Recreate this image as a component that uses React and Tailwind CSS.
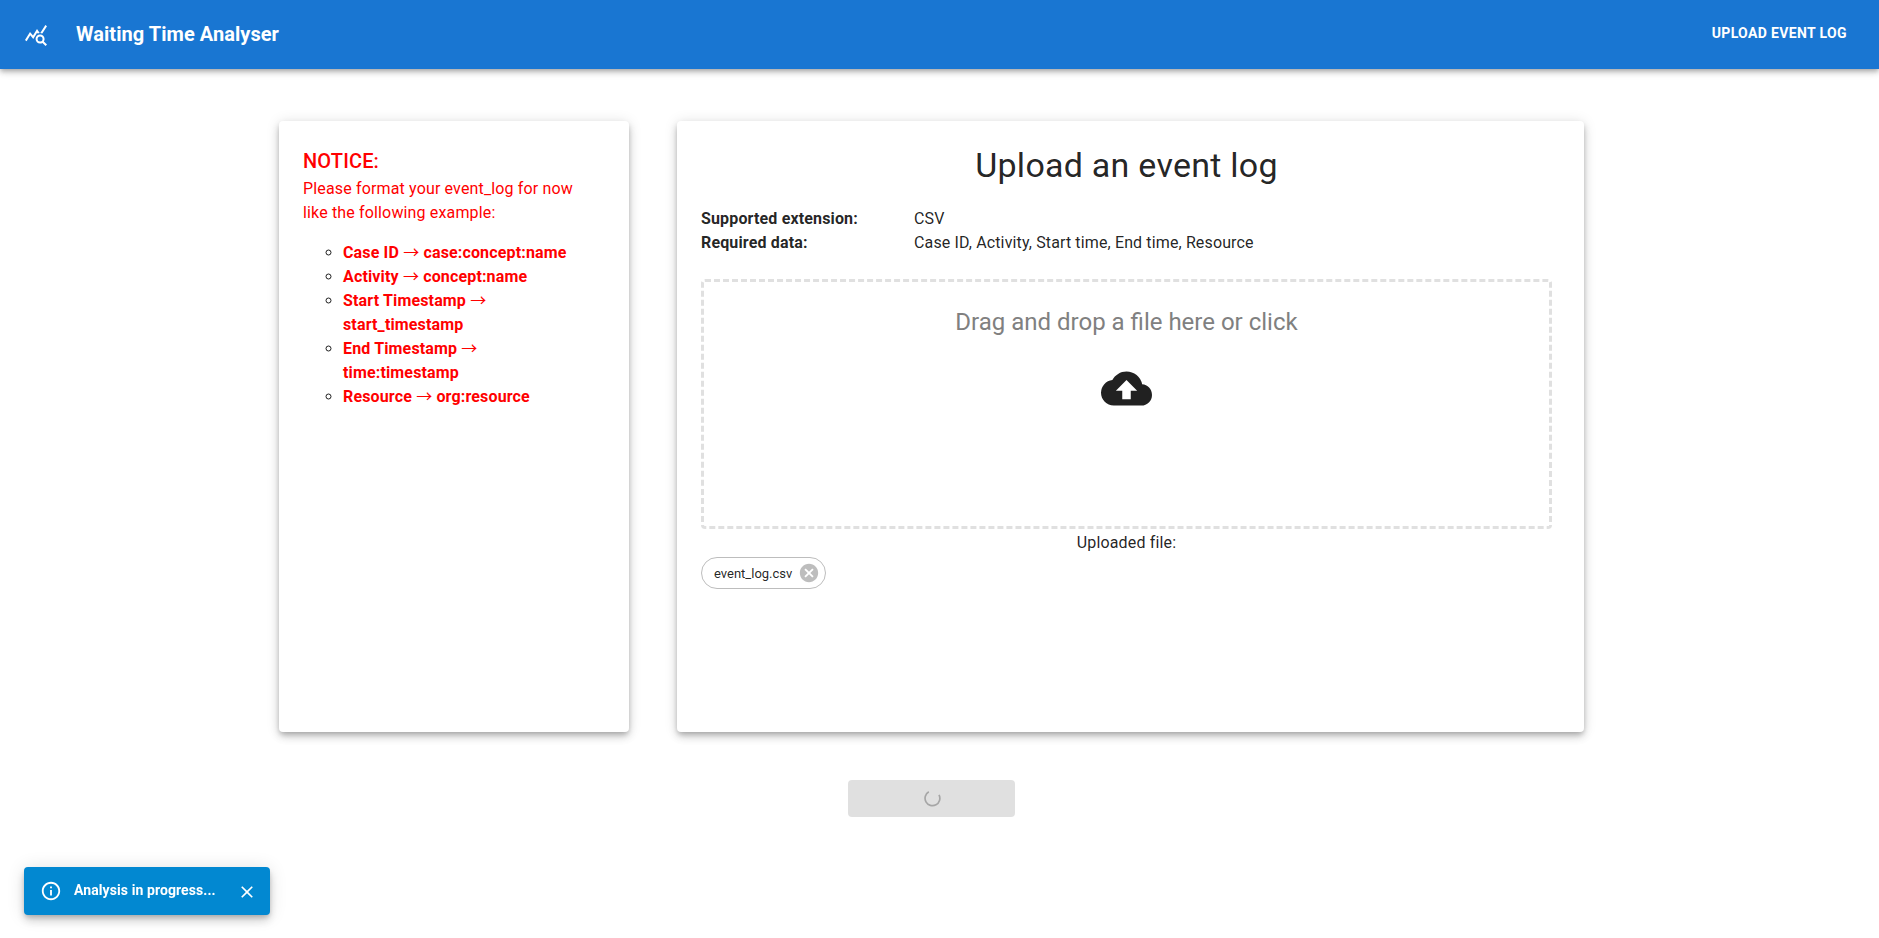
import React from "react";
import { MdQueryStats, MdCloudUpload, MdCancel, MdClose, MdOutlineInfo } from "react-icons/md";

const mappings = [
  ["Case ID", "case:concept:name"],
  ["Activity", "concept:name"],
  ["Start Timestamp", "start_timestamp"],
  ["End Timestamp", "time:timestamp"],
  ["Resource", "org:resource"],
];

const cardShadow =
  "rounded bg-white shadow-[0px_3px_5px_-1px_rgba(0,0,0,0.2),0px_5px_8px_0px_rgba(0,0,0,0.14),0px_1px_14px_0px_rgba(0,0,0,0.12)]";

function TopBar() {
  return (
    <header className="flex h-[69px] items-center justify-between bg-[#1976d2] px-6 text-white shadow-[0px_2px_4px_-1px_rgba(0,0,0,0.2),0px_4px_5px_0px_rgba(0,0,0,0.14),0px_1px_10px_0px_rgba(0,0,0,0.12)]">
      <div className="flex items-center gap-7">
        <MdQueryStats className="size-6" />
        <h1 className="pb-0.5 text-[20px] leading-8 font-bold tracking-[0.05px]">Waiting Time Analyser</h1>
      </div>
      <button className="px-2 pb-[3px] text-[14px] leading-6 font-bold tracking-[0.36px] uppercase">
        Upload Event Log
      </button>
    </header>
  );
}

function Notice() {
  return (
    <section className={`${cardShadow} h-[611px] w-[350px] pt-6 pr-8 pl-6`}>
      <h2 className="text-[20px] leading-8 font-medium tracking-[0.15px] text-[#f00]">NOTICE:</h2>
      <p className="text-[16px] leading-6 tracking-[0.15px] text-[#f00]">
        Please format your event_log for now like the following example:
      </p>
      <ul className="mt-4 list-[circle] pr-4 pl-10 text-[16px] leading-6 tracking-[0.15px]">
        {mappings.map(([from, to]) => (
          <li key={from}>
            <span className="font-bold text-[#f00]">
              {from} <span className="font-['Noto_Sans_CJK_JP',sans-serif] leading-none font-normal">→</span> {to}
            </span>
          </li>
        ))}
      </ul>
    </section>
  );
}

function Upload() {
  return (
    <section className={`${cardShadow} flex h-[611px] w-[907px] flex-col pt-[23px] pr-8 pl-6`}>
      <h2 className="text-center text-[34px] leading-[42px] tracking-[0.25px]">Upload an event log</h2>
      <dl className="mt-[21px] grid grid-cols-[213px_1fr] text-[16px] leading-6 tracking-[0.15px]">
        <dt className="font-bold">Supported extension:</dt>
        <dd>CSV</dd>
        <dt className="font-bold">Required data:</dt>
        <dd className="tracking-[0.13px]">Case ID, Activity, Start time, End time, Resource</dd>
      </dl>
      <div className="mt-6 flex h-[250px] flex-col items-center rounded border-[3px] border-dashed border-black/12">
        <p className="mt-6 text-[24px] leading-8 text-[#808080]">Drag and drop a file here or click</p>
        <MdCloudUpload className="mt-[25px] size-[51px]" />
      </div>
      <p className="text-center text-[16px] leading-7 tracking-[0.15px]">Uploaded file:</p>
      <div className="flex h-8 w-[125px] items-center justify-between rounded-full border border-[#bdbdbd] pr-[5px] pl-3 text-[13px]">
        <span className="pt-px">event_log.csv</span>
        <MdCancel className="size-[22px] text-black/26" />
      </div>
    </section>
  );
}

function Toast() {
  return (
    <div className="fixed bottom-[23px] left-6 flex h-12 w-[246px] items-center rounded bg-[#0288d1] pr-[13px] pl-4 text-white shadow-[0px_3px_5px_-1px_rgba(0,0,0,0.2),0px_6px_10px_0px_rgba(0,0,0,0.14),0px_1px_18px_0px_rgba(0,0,0,0.12)]">
      <MdOutlineInfo className="size-[22px]" />
      <span className="ml-3 flex-1 pb-0.5 text-[14px] leading-5 font-bold tracking-[0.09px]">
        Analysis in progress...
      </span>
      <MdClose className="mt-0.5 size-5" />
    </div>
  );
}

export default function App() {
  return (
    <div className="min-h-screen bg-white font-[Roboto,sans-serif] text-black/87">
      <TopBar />
      <main className="flex w-[1863px] flex-col items-center pt-[52px]">
        <div className="flex gap-12">
          <Notice />
          <Upload />
        </div>
        <button className="mt-12 flex h-[37px] w-[167px] items-center justify-center rounded bg-black/12">
          <svg className="ml-px size-[17px] text-black/26" viewBox="0 0 17 17" fill="none" stroke="currentColor" strokeWidth="1.7">
            <path d="M4.8 1.8A7.4 7.4 0 1 0 15 4.8" />
          </svg>
        </button>
      </main>
      <Toast />
    </div>
  );
}
